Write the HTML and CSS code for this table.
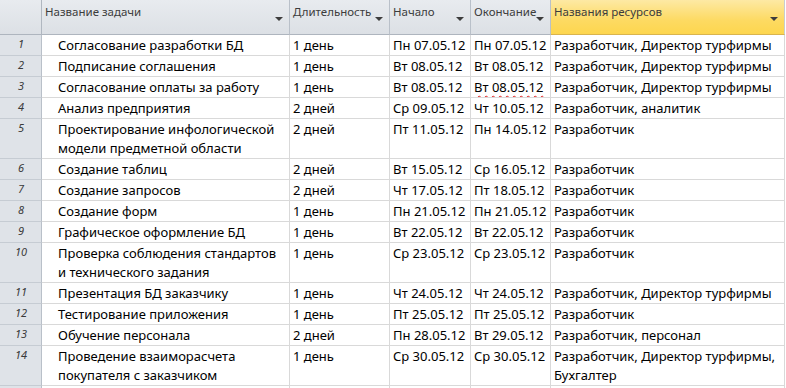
FILE: index.html
```html
<!DOCTYPE html>
<html lang="ru">
<head>
<meta charset="utf-8">
<title>Задачи</title>
<link rel="stylesheet" href="styles.css">
</head>
<body>
<div class="sheet">
  <div class="row head">
    <div class="hc corner"></div>
    <div class="hc"><span class="label">Название задачи</span><span class="arrow"></span></div>
    <div class="hc"><span class="label">Длительность</span><span class="arrow"></span></div>
    <div class="hc"><span class="label">Начало</span><span class="arrow"></span></div>
    <div class="hc"><span class="label">Окончание</span><span class="arrow"></span></div>
    <div class="hc active"><span class="label">Названия ресурсов</span><span class="arrow"></span></div>
  </div>

  <div class="row"><div class="num">1</div><div class="c name">Согласование разработки БД</div><div class="c">1 день</div><div class="c">Пн 07.05.12</div><div class="c">Пн 07.05.12</div><div class="c">Разработчик, Директор турфирмы</div></div>
  <div class="row"><div class="num">2</div><div class="c name">Подписание соглашения</div><div class="c">1 день</div><div class="c">Вт 08.05.12</div><div class="c">Вт 08.05.12</div><div class="c">Разработчик, Директор турфирмы</div></div>
  <div class="row"><div class="num">3</div><div class="c name">Согласование оплаты за работу</div><div class="c">1 день</div><div class="c">Вт 08.05.12</div><div class="c"><span class="spell">Вт 08.05.12</span></div><div class="c">Разработчик, Директор турфирмы</div></div>
  <div class="row"><div class="num">4</div><div class="c name">Анализ предприятия</div><div class="c">2 дней</div><div class="c">Ср 09.05.12</div><div class="c">Чт 10.05.12</div><div class="c">Разработчик, аналитик</div></div>
  <div class="row"><div class="num">5</div><div class="c name">Проектирование инфологической модели предметной области</div><div class="c">2 дней</div><div class="c">Пт 11.05.12</div><div class="c">Пн 14.05.12</div><div class="c">Разработчик</div></div>
  <div class="row"><div class="num">6</div><div class="c name">Создание таблиц</div><div class="c">2 дней</div><div class="c">Вт 15.05.12</div><div class="c">Ср 16.05.12</div><div class="c">Разработчик</div></div>
  <div class="row"><div class="num">7</div><div class="c name">Создание запросов</div><div class="c">2 дней</div><div class="c">Чт 17.05.12</div><div class="c">Пт 18.05.12</div><div class="c">Разработчик</div></div>
  <div class="row"><div class="num">8</div><div class="c name">Создание форм</div><div class="c">1 день</div><div class="c">Пн 21.05.12</div><div class="c">Пн 21.05.12</div><div class="c">Разработчик</div></div>
  <div class="row"><div class="num">9</div><div class="c name">Графическое оформление БД</div><div class="c">1 день</div><div class="c">Вт 22.05.12</div><div class="c">Вт 22.05.12</div><div class="c">Разработчик</div></div>
  <div class="row"><div class="num">10</div><div class="c name">Проверка соблюдения стандартов и технического задания</div><div class="c">1 день</div><div class="c">Ср 23.05.12</div><div class="c">Ср 23.05.12</div><div class="c">Разработчик</div></div>
  <div class="row"><div class="num">11</div><div class="c name">Презентация БД заказчику</div><div class="c">1 день</div><div class="c">Чт 24.05.12</div><div class="c">Чт 24.05.12</div><div class="c">Разработчик, Директор турфирмы</div></div>
  <div class="row"><div class="num">12</div><div class="c name">Тестирование приложения</div><div class="c">1 день</div><div class="c">Пт 25.05.12</div><div class="c">Пт 25.05.12</div><div class="c">Разработчик</div></div>
  <div class="row"><div class="num">13</div><div class="c name">Обучение персонала</div><div class="c">2 дней</div><div class="c">Пн 28.05.12</div><div class="c">Вт 29.05.12</div><div class="c">Разработчик, персонал</div></div>
  <div class="row"><div class="num">14</div><div class="c name">Проведение взаиморасчета покупателя с заказчиком</div><div class="c">1 день</div><div class="c">Ср 30.05.12</div><div class="c">Ср 30.05.12</div><div class="c">Разработчик, Директор турфирмы, Бухгалтер</div></div>
  <div class="row"><div class="num"></div><div class="c name"></div><div class="c"></div><div class="c"></div><div class="c"></div><div class="c"></div></div>
</div>
</body>
</html>
```
FILE: styles.css
```css
* { box-sizing: border-box; }
html, body { margin: 0; padding: 0; background: #fff; }
body {
  font-family: "Noto Sans", "Open Sans", sans-serif;
  font-size: 13px;
  color: #000;
  overflow: hidden;
}
.sheet { width: 785px; }
.row {
  display: grid;
  grid-template-columns: 42px 248px 100px 81px 80px 234px;
}
.c {
  padding: 1px 2px 0 3px;
  line-height: 19px;
  min-height: 21px;
  border-right: 1px solid #d9d9d9;
  border-bottom: 1px solid #d9d9d9;
  white-space: nowrap;
  overflow: hidden;
}
.c.name {
  padding-left: 16px;
  white-space: normal;
}
.row .c:last-child { white-space: normal; padding-right: 8px; }
.num {
  background: #dfe3e8;
  border-right: 1px solid #b9c0c9;
  border-bottom: 1px solid #c6ccd3;
  font-style: italic;
  font-size: 11px;
  line-height: 18px;
  padding-top: 0;
  color: #3a3a3a;
  text-align: center;
  padding-left: 1px;
}
.head .hc {
  height: 35px;
  display: flex;
  align-items: flex-start;
  padding: 3px 6px 0 3px;
  background: linear-gradient(#e8ebef, #dce0e5);
  border-right: 1px solid #b9c0c9;
  border-bottom: 1px solid #aeb5be;
  font-size: 11.5px;
  line-height: 17px;
  color: #3c3c3c;
}
.head .hc.corner { border-right-color: #b0b7c0; }
.head .hc.active {
  background: linear-gradient(#fde9a4, #fdda62 60%, #fdd64e);
  border-bottom-color: #d9b44e;
  border-right-color: #c9ccd1;
}
.label {
  flex: 1 1 auto;
  min-width: 0;
  white-space: nowrap;
}
.arrow {
  flex: 0 0 auto;
  width: 0;
  height: 0;
  margin-top: 14px;
  margin-left: 1px;
  border-left: 4px solid transparent;
  border-right: 4px solid transparent;
  border-top: 4px solid #3d3d3d;
}
.spell {
  text-decoration: underline wavy #e02020;
  text-decoration-thickness: 1px;
  text-underline-offset: 3px;
  text-decoration-skip-ink: none;
}
```
